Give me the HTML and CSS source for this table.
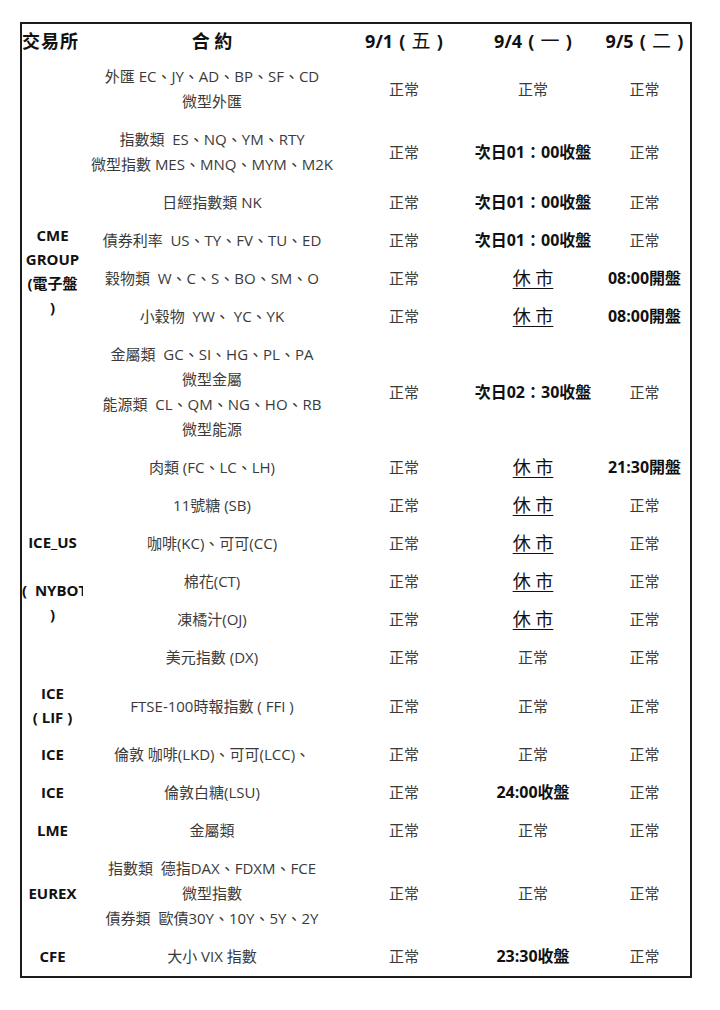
FILE: index.html
```html
<!DOCTYPE html>
<html lang="zh-Hant">
<head>
<meta charset="utf-8">
<title>交易所假期交易時間</title>
<link rel="stylesheet" href="styles.css">
</head>
<body>
<div class="page">
<table class="sched">
<colgroup>
<col class="c1"><col class="c2"><col class="c3"><col class="c4"><col class="c5">
</colgroup>
<thead>
<tr>
<th class="h-ex">交易所</th>
<th>合 約</th>
<th class="day">9/1&nbsp;(&nbsp;<span class="wd">五</span>&nbsp;)</th>
<th class="day">9/4&nbsp;(&nbsp;<span class="wd">一</span>&nbsp;)</th>
<th class="day">9/5&nbsp;(&nbsp;<span class="wd">二</span>&nbsp;)</th>
</tr>
</thead>
<tbody>
<tr>
<td class="ex" rowspan="8">CME<br>GROUP<br>(電子盤<br>)</td>
<td>外匯 EC、JY、AD、BP、SF、CD<br>微型外匯</td>
<td>正常</td><td>正常</td><td>正常</td>
</tr>
<tr>
<td>指數類&nbsp; ES、NQ、YM、RTY<br>微型指數 MES、MNQ、MYM、M2K</td>
<td>正常</td><td class="b">次日01：00收盤</td><td>正常</td>
</tr>
<tr>
<td>日經指數類 NK</td>
<td>正常</td><td class="b">次日01：00收盤</td><td>正常</td>
</tr>
<tr>
<td>債券利率&nbsp; US、TY、FV、TU、ED</td>
<td>正常</td><td class="b">次日01：00收盤</td><td>正常</td>
</tr>
<tr>
<td>穀物類&nbsp; W、C、S、BO、SM、O</td>
<td>正常</td><td class="closed"><u>休 市</u></td><td class="b">08:00開盤</td>
</tr>
<tr>
<td>小穀物&nbsp; YW、 YC、YK</td>
<td>正常</td><td class="closed"><u>休 市</u></td><td class="b">08:00開盤</td>
</tr>
<tr>
<td>金屬類&nbsp; GC、SI、HG、PL、PA<br>微型金屬<br>能源類&nbsp; CL、QM、NG、HO、RB<br>微型能源</td>
<td>正常</td><td class="b">次日02：30收盤</td><td>正常</td>
</tr>
<tr>
<td>肉類 (FC、LC、LH)</td>
<td>正常</td><td class="closed"><u>休 市</u></td><td class="b">21:30開盤</td>
</tr>
<tr>
<td class="ex clip" rowspan="5"><span class="up">ICE_US<br>&nbsp;<br><span class="nowrap">(&nbsp;&nbsp;NYBOT</span><br>)</span></td>
<td>11號糖 (SB)</td>
<td>正常</td><td class="closed"><u>休 市</u></td><td>正常</td>
</tr>
<tr>
<td>咖啡(KC)、可可(CC)</td>
<td>正常</td><td class="closed"><u>休 市</u></td><td>正常</td>
</tr>
<tr>
<td>棉花(CT)</td>
<td>正常</td><td class="closed"><u>休 市</u></td><td>正常</td>
</tr>
<tr>
<td>凍橘汁(OJ)</td>
<td>正常</td><td class="closed"><u>休 市</u></td><td>正常</td>
</tr>
<tr>
<td>美元指數 (DX)</td>
<td>正常</td><td>正常</td><td>正常</td>
</tr>
<tr>
<td class="ex">ICE<br>( LIF )</td>
<td>FTSE-100時報指數 ( FFI )</td>
<td>正常</td><td>正常</td><td>正常</td>
</tr>
<tr>
<td class="ex">ICE</td>
<td>倫敦 咖啡(LKD)、可可(LCC)、</td>
<td>正常</td><td>正常</td><td>正常</td>
</tr>
<tr>
<td class="ex">ICE</td>
<td>倫敦白糖(LSU)</td>
<td>正常</td><td class="b">24:00收盤</td><td>正常</td>
</tr>
<tr>
<td class="ex">LME</td>
<td>金屬類</td>
<td>正常</td><td>正常</td><td>正常</td>
</tr>
<tr>
<td class="ex">EUREX</td>
<td>指數類&nbsp; 德指DAX、FDXM、FCE<br>微型指數<br>債券類&nbsp; 歐債30Y、10Y、5Y、2Y</td>
<td>正常</td><td>正常</td><td>正常</td>
</tr>
<tr>
<td class="ex">CFE</td>
<td>大小 VIX 指數</td>
<td>正常</td><td class="b">23:30收盤</td><td>正常</td>
</tr>
</tbody>
</table>
</div>
</body>
</html>
```

FILE: styles.css
```css
html, body {
  margin: 0;
  padding: 0;
  background: #ffffff;
}

.page {
  padding: 22px 0 0 20px;
}

.sched {
  width: 672px;
  table-layout: fixed;
  border-collapse: separate;
  border-spacing: 0;
  border: 2px solid #1c1c1c;
  font-family: "Open Sans", "Noto Sans CJK TC", sans-serif;
  color: #3a3a3a;
}

.c1 { width: 61px; }
.c2 { width: 258px; }
.c3 { width: 126px; }
.c4 { width: 132px; }
.c5 { width: 91px; }

.sched th {
  font-size: 18px;
  font-weight: 700;
  color: #111111;
  line-height: 24px;
  padding: 5px 0;
  text-align: center;
  white-space: nowrap;
}

.sched th.h-ex {
  text-align: left;
  padding-left: 0;
  letter-spacing: 1px;
}

.sched th.day {
  word-spacing: 1.5px;
}

.wd {
  font-weight: 400;
  font-size: 19px;
}

.sched td {
  font-size: 15px;
  line-height: 25px;
  padding: 6px 0 7px;
  text-align: center;
  vertical-align: middle;
}

.sched td.ex {
  font-size: 15px;
  font-weight: 700;
  color: #111111;
  line-height: 24px;
  padding: 4px 0 7px;
}

.sched td.clip {
  overflow: hidden;
}

.up {
  display: block;
  margin-top: -6px;
}

.nowrap {
  white-space: nowrap;
}

.sched td.b {
  font-size: 16px;
  font-weight: 700;
  color: #111111;
}

.sched td.closed {
  font-size: 18px;
  color: #111111;
}

.sched td.closed u {
  text-underline-offset: 3px;
}
```
